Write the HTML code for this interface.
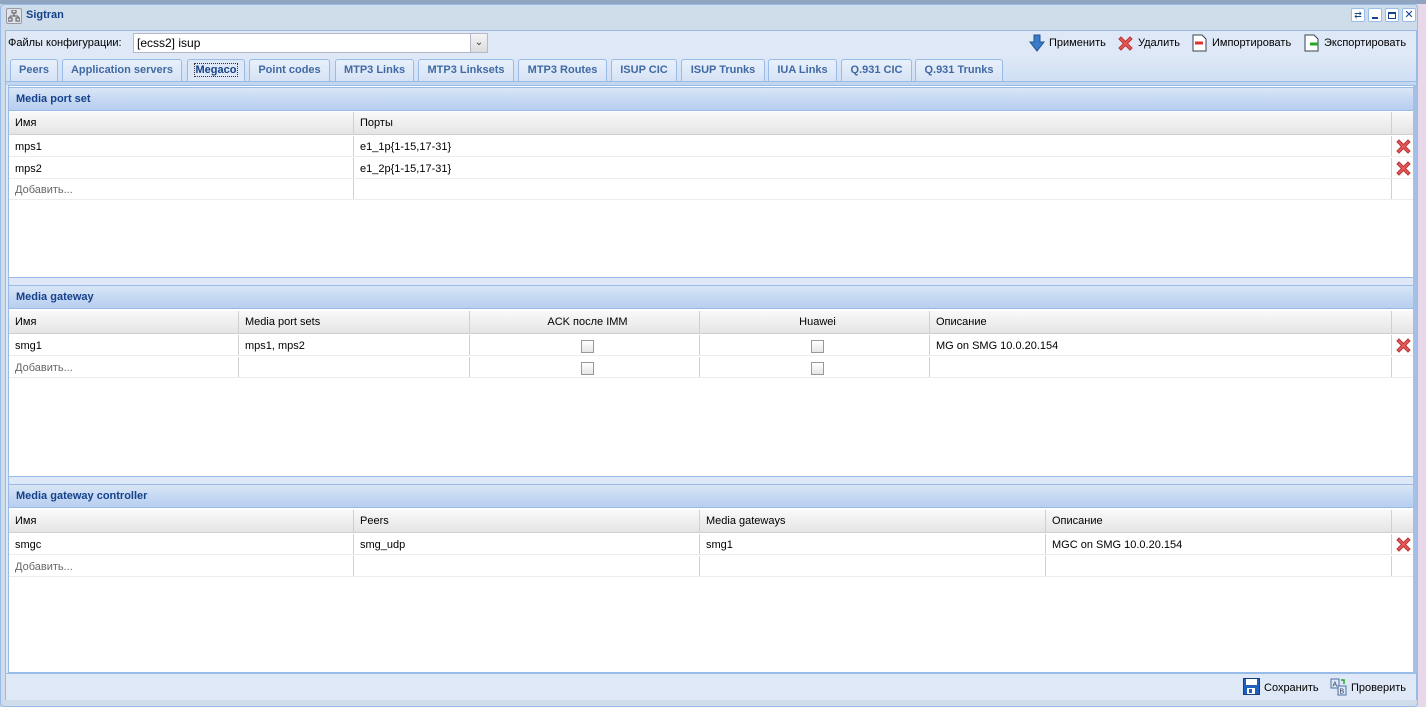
<!DOCTYPE html>
<html><head><meta charset="utf-8"><style>
*{box-sizing:border-box;margin:0;padding:0}
body{width:1426px;height:707px;overflow:hidden;background:#cbd8e8;font-family:"Liberation Sans",sans-serif;font-size:11px;color:#000;position:relative}
.a{position:absolute}
.tab{position:absolute;top:59px;height:22px;border:1px solid #99bbe8;border-bottom:none;border-radius:3px 3px 0 0;background:linear-gradient(#e8f0fb,#d6e3f5);color:#416aa3;font-weight:bold;text-align:center;line-height:21px}
.sh{position:absolute;left:9px;width:1404px;height:24px;background:linear-gradient(#dae6f6,#c6d9f3 50%,#b9cff0);border-top:1px solid #99bbe8;border-bottom:1px solid #99bbe8;color:#15428b;font-weight:bold;padding-left:7px;line-height:22px}
.gh{position:absolute;left:9px;width:1404px;height:23px;background:linear-gradient(#f9f9f9,#e5e5e5);border-bottom:1px solid #d0d0d0}
.gh .c{line-height:23px}
.c{position:absolute;top:0;height:100%;border-right:1px solid #d0d0d0;padding-left:6px;line-height:22px;white-space:nowrap}
.r{position:absolute;left:9px;width:1404px;height:21px;background:#fff;border-bottom:1px solid #ededed}
.g{color:#666}
.cb{display:inline-block;width:13px;height:13px;border:1px solid #999;background:linear-gradient(#fff,#e6e6e6);vertical-align:middle}
.x{position:absolute;right:1px;top:2px}
</style></head><body>
<div class="a" style="left:0;top:0;width:1426px;height:4px;background:#8fa4bf"></div>
<div class="a" style="left:1418px;top:4px;width:8px;height:703px;background:#e8d8ea"></div>
<div class="a" style="left:0;top:4px;width:1418px;height:703px;background:#cfdcea;border:1px solid #99bbe8;border-radius:4px"></div>
<div class="a" style="left:6px;top:8px;width:16px;height:16px;border:1px solid #99a;background:#e0e4ea;border-radius:2px"></div>
<svg class="a" style="left:8px;top:10px" width="12" height="12"><rect x="4" y="0" width="4" height="3" fill="none" stroke="#555"/><rect x="0" y="8" width="4" height="3" fill="none" stroke="#555"/><rect x="8" y="8" width="4" height="3" fill="none" stroke="#555"/><path d="M6 3v3M2 6h8M2 6v2M10 6v2" stroke="#555"/></svg>
<div class="a" style="left:26px;top:9px;font-weight:bold;color:#15428b;font-size:11px">Sigtran</div>
<div class="a" style="left:1351px;top:8px;width:14px;height:14px;border:1px solid #99bbe8;background:#fff;border-radius:2px;color:#15428b;font-size:9px;text-align:center;line-height:12px">⇄</div>
<div class="a" style="left:1368px;top:8px;width:14px;height:14px;border:1px solid #99bbe8;background:#fff;border-radius:2px"><div style="margin:8px 3px 0;height:2px;background:#15428b"></div></div>
<div class="a" style="left:1385px;top:8px;width:14px;height:14px;border:1px solid #99bbe8;background:#fff;border-radius:2px"><div style="margin:3px 2px;height:7px;border:1px solid #15428b;border-top-width:2px"></div></div>
<div class="a" style="left:1402px;top:8px;width:14px;height:14px;border:1px solid #99bbe8;background:#fff;border-radius:2px;color:#15428b;font-size:11px;text-align:center;line-height:12px">✕</div>
<div class="a" style="left:5px;top:30px;width:1412px;height:670px;background:#dfe8f6;border:1px solid #99bbe8"></div>
<div class="a" style="left:8px;top:37px">Файлы конфигурации:</div>
<div class="a" style="left:133px;top:33px;width:355px;height:20px;border:1px solid #b5b8c8;background:#fff;padding-left:3px;line-height:18px;font-size:12px">[ecss2] isup</div>
<div class="a" style="left:470px;top:34px;width:17px;height:18px;background:linear-gradient(#f4f4f4,#dcdcdc);border-left:1px solid #b5b8c8;color:#333;font-size:10px;text-align:center;line-height:18px">⌄</div>
<svg class="a" style="left:1029px;top:34px" width="16" height="18"><path d="M5 1h6v7h4l-7 9-7-9h4z" fill="#3a7cc8" stroke="#22558f"/></svg>
<div class="a" style="left:1049px;top:37px">Применить</div>
<svg class="a" style="left:1117px;top:35px" width="17" height="17"><path d="M2 4l2-2 4.5 4.5L13 2l2 2-4.5 4.5L15 13l-2 2-4.5-4.5L4 15l-2-2 4.5-4.5z" fill="#e85a5a" stroke="#b33"/></svg>
<div class="a" style="left:1138px;top:37px">Удалить</div>
<svg class="a" style="left:1191px;top:34px" width="16" height="18"><path d="M2 1h9l4 4v12H2z" fill="#fff" stroke="#345"/><path d="M4 9h8" stroke="#d33" stroke-width="3"/></svg>
<div class="a" style="left:1212px;top:37px">Импортировать</div>
<svg class="a" style="left:1303px;top:34px" width="16" height="18"><path d="M2 1h9l4 4v12H2z" fill="#fff" stroke="#345"/><path d="M7 10h8" stroke="#2a2" stroke-width="3"/></svg>
<div class="a" style="left:1324px;top:37px">Экспортировать</div>
<div class="a" style="left:6px;top:56px;width:1410px;height:27px;background:linear-gradient(#dfe8f6,#cedff5)"></div>
<div class="tab" style="left:10px;width:48px">Peers</div>
<div class="tab" style="left:62px;width:120px">Application servers</div>
<div class="tab" style="left:187px;width:58px;height:25px;background:#dfe8f6;color:#15428b"><span style="border:1px dotted #333;padding:0 1px">Megaco</span></div>
<div class="tab" style="left:249px;width:81px">Point codes</div>
<div class="tab" style="left:335px;width:79px">MTP3 Links</div>
<div class="tab" style="left:418px;width:96px">MTP3 Linksets</div>
<div class="tab" style="left:518px;width:89px">MTP3 Routes</div>
<div class="tab" style="left:611px;width:66px">ISUP CIC</div>
<div class="tab" style="left:681px;width:84px">ISUP Trunks</div>
<div class="tab" style="left:768px;width:69px">IUA Links</div>
<div class="tab" style="left:841px;width:71px">Q.931 CIC</div>
<div class="tab" style="left:915px;width:88px">Q.931 Trunks</div>
<div class="a" style="left:6px;top:81px;width:1410px;height:4px;background:#c3d5ef;border-top:1px solid #99bbe8"></div>
<div class="a" style="left:8px;top:85px;width:1406px;height:588px;background:#fff;border:1px solid #99bbe8"></div>
<div class="a" style="left:1413px;top:85px;width:4px;height:589px;background:#a4c0e6"></div>

<div class="sh" style="top:87px">Media port set</div>
<div class="gh" style="top:112px"><div class="c" style="left:0;width:345px">Имя</div><div class="c" style="left:345px;width:1038px">Порты</div></div>
<div class="r" style="top:136px"><div class="c" style="left:0;width:345px">mps1</div><div class="c" style="left:345px;width:1038px">e1_1p{1-15,17-31}</div><svg class="x" width="17" height="17"><path d="M2 4l2-2 4.5 4.5L13 2l2 2-4.5 4.5L15 13l-2 2-4.5-4.5L4 15l-2-2 4.5-4.5z" fill="#e85a5a" stroke="#b33"/></svg></div>
<div class="r" style="top:158px"><div class="c" style="left:0;width:345px">mps2</div><div class="c" style="left:345px;width:1038px">e1_2p{1-15,17-31}</div><svg class="x" width="17" height="17"><path d="M2 4l2-2 4.5 4.5L13 2l2 2-4.5 4.5L15 13l-2 2-4.5-4.5L4 15l-2-2 4.5-4.5z" fill="#e85a5a" stroke="#b33"/></svg></div>
<div class="r" style="top:179px"><div class="c g" style="left:0;width:345px">Добавить...</div><div class="c" style="left:345px;width:1038px"></div></div>
<div class="a" style="left:9px;top:277px;width:1404px;height:8px;background:#dfe8f6;border-top:1px solid #99bbe8"></div>

<div class="sh" style="top:285px">Media gateway</div>
<div class="gh" style="top:311px"><div class="c" style="left:0;width:230px">Имя</div><div class="c" style="left:230px;width:231px">Media port sets</div><div class="c" style="left:461px;width:230px;text-align:center">ACK после IMM</div><div class="c" style="left:691px;width:230px;text-align:center">Huawei</div><div class="c" style="left:921px;width:462px">Описание</div></div>
<div class="r" style="top:335px"><div class="c" style="left:0;width:230px">smg1</div><div class="c" style="left:230px;width:231px">mps1, mps2</div><div class="c" style="left:461px;width:230px;text-align:center"><span class="cb"></span></div><div class="c" style="left:691px;width:230px;text-align:center"><span class="cb"></span></div><div class="c" style="left:921px;width:462px">MG on SMG 10.0.20.154</div><svg class="x" width="17" height="17"><path d="M2 4l2-2 4.5 4.5L13 2l2 2-4.5 4.5L15 13l-2 2-4.5-4.5L4 15l-2-2 4.5-4.5z" fill="#e85a5a" stroke="#b33"/></svg></div>
<div class="r" style="top:357px"><div class="c g" style="left:0;width:230px">Добавить...</div><div class="c" style="left:230px;width:231px"></div><div class="c" style="left:461px;width:230px;text-align:center"><span class="cb"></span></div><div class="c" style="left:691px;width:230px;text-align:center"><span class="cb"></span></div><div class="c" style="left:921px;width:462px"></div></div>
<div class="a" style="left:9px;top:476px;width:1404px;height:8px;background:#dfe8f6;border-top:1px solid #99bbe8"></div>

<div class="sh" style="top:484px">Media gateway controller</div>
<div class="gh" style="top:510px"><div class="c" style="left:0;width:345px">Имя</div><div class="c" style="left:345px;width:346px">Peers</div><div class="c" style="left:691px;width:346px">Media gateways</div><div class="c" style="left:1037px;width:346px">Описание</div></div>
<div class="r" style="top:534px"><div class="c" style="left:0;width:345px">smgc</div><div class="c" style="left:345px;width:346px">smg_udp</div><div class="c" style="left:691px;width:346px">smg1</div><div class="c" style="left:1037px;width:346px">MGC on SMG 10.0.20.154</div><svg class="x" width="17" height="17"><path d="M2 4l2-2 4.5 4.5L13 2l2 2-4.5 4.5L15 13l-2 2-4.5-4.5L4 15l-2-2 4.5-4.5z" fill="#e85a5a" stroke="#b33"/></svg></div>
<div class="r" style="top:556px"><div class="c g" style="left:0;width:345px">Добавить...</div><div class="c" style="left:345px;width:346px"></div><div class="c" style="left:691px;width:346px"></div><div class="c" style="left:1037px;width:346px"></div></div>

<div class="a" style="left:6px;top:673px;width:1410px;height:27px;background:#dfe8f6;border-top:1px solid #99bbe8"></div>
<svg class="a" style="left:1243px;top:678px" width="17" height="17"><rect x="0.5" y="0.5" width="16" height="16" fill="#1f5fbf" stroke="#123f85"/><rect x="3" y="1" width="11" height="6" fill="#fff"/><rect x="4" y="10" width="8" height="6" fill="#fff"/><rect x="6" y="11" width="3" height="4" fill="#1f5fbf"/></svg>
<div class="a" style="left:1264px;top:682px">Сохранить</div>
<svg class="a" style="left:1330px;top:678px" width="18" height="18"><rect x="1" y="1" width="8" height="9" fill="#dde9f8" stroke="#4a6fa5"/><text x="2.5" y="8.5" font-size="7" font-family="Liberation Sans" fill="#335">A</text><rect x="8" y="8" width="8" height="9" fill="#dde9f8" stroke="#4a6fa5"/><text x="9.5" y="15.5" font-size="7" font-family="Liberation Sans" fill="#335">B</text><path d="M11 2h3v4" stroke="#2a2" fill="none" stroke-width="1.5"/></svg>
<div class="a" style="left:1351px;top:682px">Проверить</div>
</body></html>
